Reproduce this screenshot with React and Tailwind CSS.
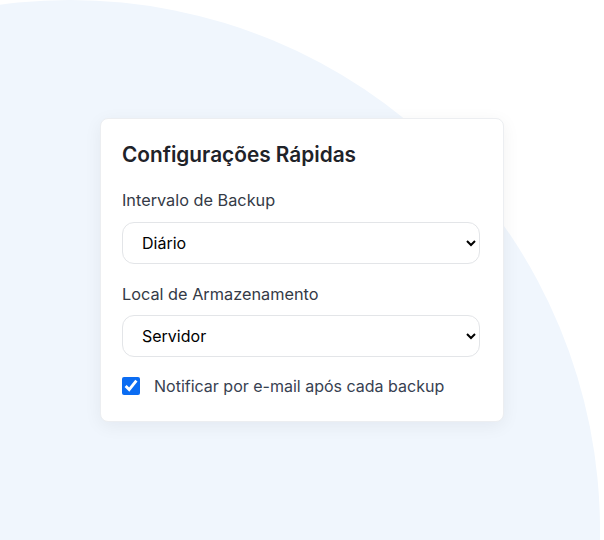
import { useState } from 'react'

const SELECT_CLASS =
  'block h-[42px] w-[358px] rounded-xl border border-[#e3e5e8] bg-white pl-[15px] pr-2 text-base text-black outline-none'

export default function App() {
  const [interval, setInterval] = useState('diario')
  const [storage, setStorage] = useState('servidor')
  const [notify, setNotify] = useState(true)

  return (
    <div
      className="relative flex h-[540px] w-[604px] items-center justify-center overflow-hidden bg-white"
      style={{ fontFamily: 'Inter, "Noto Sans", sans-serif' }}
    >
      <div className="absolute left-[-460px] top-0 h-[1060px] w-[1060px] rounded-full bg-[#f0f6fd]" />

      <section className="relative w-[404px] rounded-lg border border-[#eceef1] bg-white px-[21px] pb-[23px] pt-[22px] shadow-[0_4px_18px_rgba(15,23,42,0.06)]">
        <h2 className="mb-[19px] text-[20.8px] font-semibold leading-7 text-[#1f2329]">Configurações Rápidas</h2>

        <div className="mb-[18px]">
          <label className="mb-[10px] block text-[16.3px] leading-6 text-[#343a46]">Intervalo de Backup</label>
          <select value={interval} onChange={(e) => setInterval(e.target.value)} className={SELECT_CLASS}>
            <option value="diario">Diário</option>
            <option value="semanal">Semanal</option>
            <option value="mensal">Mensal</option>
          </select>
        </div>

        <div className="mb-[17px]">
          <label className="mb-[9px] block text-[16.3px] leading-6 text-[#343a46]">Local de Armazenamento</label>
          <select value={storage} onChange={(e) => setStorage(e.target.value)} className={SELECT_CLASS}>
            <option value="servidor">Servidor</option>
            <option value="nuvem">Nuvem</option>
            <option value="local">Disco local</option>
          </select>
        </div>

        <label className="flex items-center gap-[14px] text-base leading-6 text-[#374151]">
          <input
            type="checkbox"
            checked={notify}
            onChange={(e) => setNotify(e.target.checked)}
            className="m-0 h-[18px] w-[18px] accent-[#0b6cf2]"
          />
          Notificar por e-mail após cada backup
        </label>
      </section>
    </div>
  )
}
